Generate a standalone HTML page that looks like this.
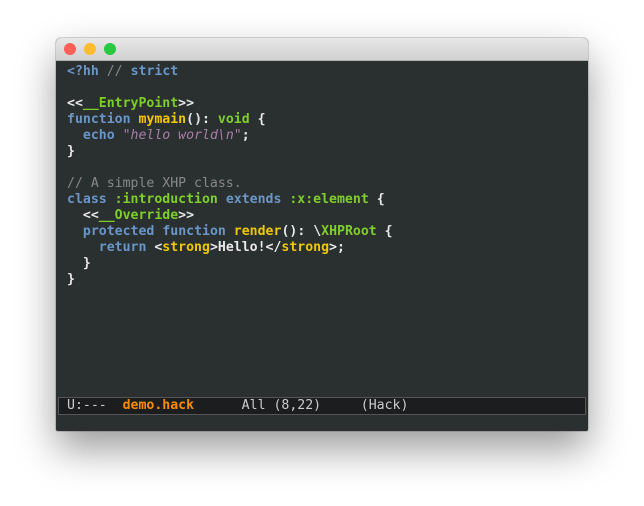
<!DOCTYPE html>
<html><head><style>
body{margin:0;width:644px;height:506px;background:#fff;position:relative;overflow:hidden;font-family:"DejaVu Sans Mono","Liberation Mono",monospace}
.win{position:absolute;left:56px;top:38px;width:532px;height:393px;background:#2a2f30;border-radius:5px 5px 2px 2px;box-shadow:0 18px 40px rgba(0,0,0,.4),0 0 0 1px rgba(0,0,0,.15);overflow:hidden}
.tb{height:22px;background:linear-gradient(#e8e8e8,#d0d0d0);border-bottom:1px solid #b0b0b0;position:relative}
.dot{position:absolute;top:5px;width:12px;height:12px;border-radius:50%}
pre{margin:0;position:absolute;left:11px;top:26px;font-size:13.2px;line-height:16px;color:#e8e8e8;font-family:"DejaVu Sans Mono",monospace;font-weight:bold}
.k{color:#6b96c8}.g{color:#7fcf2a}.y{color:#f0c800}.s{color:#a87fa8;font-style:italic;font-weight:normal}.c{color:#888;font-weight:normal}
.ml{position:absolute;left:2px;right:2px;top:359px;height:16px;background:#1b1d1e;border:1px solid #555;font-size:13.2px;line-height:16px;color:#ccc;white-space:pre;padding-left:8px}
.o{color:#ff8c00;font-weight:bold}
</style></head><body>
<div class="win">
<div class="tb"><div class="dot" style="left:8px;background:#fc5f57"></div><div class="dot" style="left:28px;background:#fdbc2e"></div><div class="dot" style="left:48px;background:#28c840"></div></div>
<pre><span class="k">&lt;?hh</span> <span class="c">//</span> <span class="k">strict</span>

&lt;&lt;<span class="g">__EntryPoint</span>&gt;&gt;
<span class="k">function</span> <span class="y">mymain</span>(): <span class="g">void</span> {
  <span class="k">echo</span> <span class="s">"hello world\n"</span>;
}

<span class="c">// A simple XHP class.</span>
<span class="k">class</span> <span class="g">:introduction</span> <span class="k">extends</span> <span class="g">:x:element</span> {
  &lt;&lt;<span class="g">__Override</span>&gt;&gt;
  <span class="k">protected</span> <span class="k">function</span> <span class="y">render</span>(): \<span class="g">XHPRoot</span> {
    <span class="k">return</span> &lt;<span class="y">strong</span>&gt;Hello!&lt;/<span class="y">strong</span>&gt;;
  }
}</pre>
<div class="ml">U:---  <span class="o">demo.hack</span>      All (8,22)     (Hack)</div>
</div>
</body></html>
